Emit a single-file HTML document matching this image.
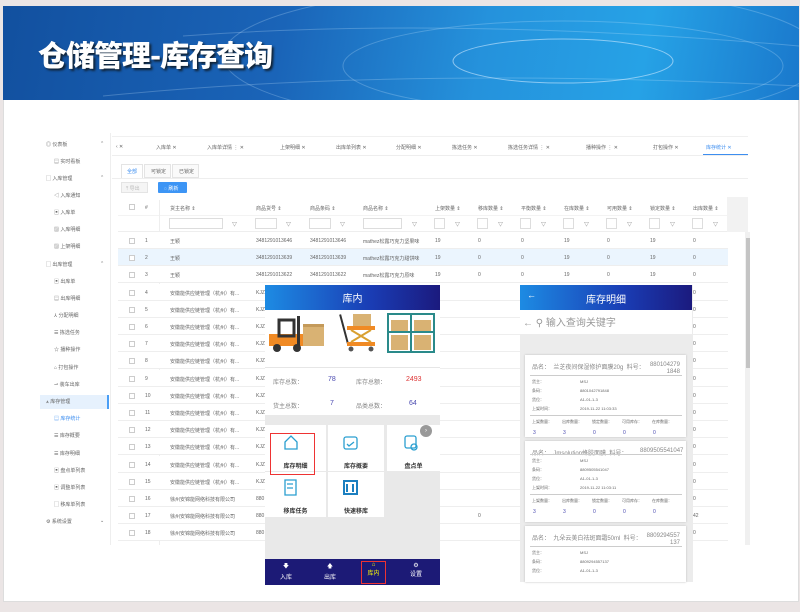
<!DOCTYPE html>
<html><head><meta charset="utf-8"><style>
*{margin:0;padding:0;box-sizing:border-box}
body{width:800px;height:612px;background:#ebe5e5;font-family:"Liberation Sans","Noto Sans CJK SC",sans-serif;position:relative;overflow:hidden;color:#666}
.a{position:absolute}
.t{font-size:5px;white-space:nowrap;color:#666}
.page{left:3px;top:6px;width:796px;height:596px;background:#fff;border:1px solid #ddd}
.banner{left:3px;top:6px;width:796px;height:94px;background:linear-gradient(100deg,#12509f 0%,#1a64b8 35%,#2592dc 60%,#26a2e6 80%,#1a78cc 100%);overflow:hidden}
.banner h1{position:absolute;left:35px;top:27px;font-size:29px;font-weight:900;color:#fff;letter-spacing:-1px;font-family:"Noto Sans CJK SC",sans-serif;text-shadow:2px 2px 2px #123}
.row{position:absolute;left:118px;width:610px;height:17px;border-bottom:1px solid #eee}
.ph{background:linear-gradient(90deg,#1d8be3,#1a3db5 60%,#1b1a7e)}
.cell{position:absolute;background:#fff;text-align:center;font-size:6px;font-weight:bold;color:#333}
.card{position:absolute;left:525px;width:161px;background:#fff;box-shadow:0 0 2px #bbb}
.nav{position:absolute;color:#fff;font-size:6px;text-align:center}
</style></head><body>
<div class="a page"></div>
<div class="a banner">
<svg class="a" style="left:0;top:0" width="796" height="94"><g fill="none" stroke="#cfeaff" stroke-opacity=".25"><ellipse cx="560" cy="60" rx="220" ry="45"/><ellipse cx="520" cy="50" rx="300" ry="70"/><path d="M180 30 Q450 10 796 40"/><path d="M100 90 Q400 60 796 80"/><ellipse cx="560" cy="55" rx="110" ry="22" stroke-opacity=".6"/></g></svg>
<h1>仓储管理-库存查询</h1></div>
<div class="a" style="left:110px;top:133px;width:1px;height:412px;background:#eee"></div>
<div class="a" style="left:40px;top:395px;width:69px;height:14px;background:#e6f1fd;border-right:2px solid #4a9ef5"></div>
<div class="sb">
<div class="a t" style="left:46px;top:141px">◎ 仪表板</div><div class="a t" style="left:100px;top:141px">⌃</div>
<div class="a t" style="left:54px;top:158px">▤ 实时看板</div>
<div class="a t" style="left:46px;top:175px">▢ 入库管理</div><div class="a t" style="left:100px;top:175px">⌃</div>
<div class="a t" style="left:54px;top:192px">◁ 入库通知</div>
<div class="a t" style="left:54px;top:209px">▣ 入库单</div>
<div class="a t" style="left:54px;top:226px">▨ 入库明细</div>
<div class="a t" style="left:54px;top:243px">▨ 上架明细</div>
<div class="a t" style="left:46px;top:261px">▢ 出库管理</div><div class="a t" style="left:100px;top:261px">⌃</div>
<div class="a t" style="left:54px;top:278px">▣ 出库单</div>
<div class="a t" style="left:54px;top:295px">▤ 出库明细</div>
<div class="a t" style="left:54px;top:312px">⅄ 分配明细</div>
<div class="a t" style="left:54px;top:329px">☰ 拣选任务</div>
<div class="a t" style="left:54px;top:346px">☆ 播种操作</div>
<div class="a t" style="left:54px;top:364px">⌂ 打包操作</div>
<div class="a t" style="left:54px;top:381px">⇀ 装车出库</div>
<div class="a t" style="left:46px;top:398px">⩓ 库存管理</div>
<div class="a t" style="left:54px;top:415px;color:#3d8ef0">▤ 库存统计</div>
<div class="a t" style="left:54px;top:432px">☰ 库存概要</div>
<div class="a t" style="left:54px;top:450px">☰ 库存明细</div>
<div class="a t" style="left:54px;top:467px">▣ 盘点单列表</div>
<div class="a t" style="left:54px;top:484px">▣ 调整单列表</div>
<div class="a t" style="left:54px;top:501px">▢ 移库单列表</div>
<div class="a t" style="left:46px;top:518px">⚙ 系统设置</div><div class="a t" style="left:100px;top:518px">⌄</div>
</div>
<div class="a" style="left:112px;top:136px;width:636px;height:1px;background:#f0f0f0"></div>
<div class="a" style="left:112px;top:155px;width:636px;height:1px;background:#eee"></div>
<div class="a t" style="left:116px;top:144px">‹ ✕</div>
<div class="a t" style="left:156px;top:144px">入库单 ✕</div>
<div class="a t" style="left:207px;top:144px">入库单详情 ⋮ ✕</div>
<div class="a t" style="left:280px;top:144px">上架明细 ✕</div>
<div class="a t" style="left:336px;top:144px">出库单列表 ✕</div>
<div class="a t" style="left:396px;top:144px">分配明细 ✕</div>
<div class="a t" style="left:452px;top:144px">拣选任务 ✕</div>
<div class="a t" style="left:508px;top:144px">拣选任务详情 ⋮ ✕</div>
<div class="a t" style="left:586px;top:144px">播种操作 ⋮ ✕</div>
<div class="a t" style="left:653px;top:144px">打包操作 ✕</div>
<div class="a t" style="left:706px;top:144px;color:#3d8ef0">库存统计 ✕</div>
<div class="a" style="left:703px;top:154px;width:45px;height:1px;background:#3d8ef0"></div>
<div class="a" style="left:121px;top:164px;width:22px;height:14px;border:1px solid #e4e4e4;border-bottom:none"></div>
<div class="a" style="left:144px;top:164px;width:27px;height:14px;border:1px solid #e4e4e4;background:#fafafa"></div>
<div class="a" style="left:172px;top:164px;width:27px;height:14px;border:1px solid #e4e4e4;background:#fafafa"></div>
<div class="a" style="left:112px;top:178px;width:636px;height:1px;background:#eee"></div>
<div class="a t" style="left:127px;top:168px;color:#3d8ef0">全部</div>
<div class="a t" style="left:151px;top:168px">可锁定</div>
<div class="a t" style="left:179px;top:168px">已锁定</div>
<div class="a" style="left:121px;top:182px;width:27px;height:11px;border:1px solid #e4e4e4;background:#f5f5f5"></div>
<div class="a t" style="left:126px;top:185px;color:#bbb">⤒ 导出</div>
<div class="a" style="left:158px;top:182px;width:29px;height:11px;background:#3d95f5;border-radius:1px"></div>
<div class="a t" style="left:164px;top:185px;color:#fff">◌ 刷新</div>
<div class="a" style="left:118px;top:200px;width:610px;height:32px;background:#fff;border-bottom:1px solid #eee"></div>
<div class="a" style="left:118px;top:215px;width:610px;height:1px;background:#f3f3f3"></div>
<div class="a" style="left:727px;top:197px;width:21px;height:35px;background:#f2f2f2"></div>
<div class="a" style="left:745px;top:232px;width:5px;height:313px;background:#f0f0f0"></div>
<div class="a" style="left:746px;top:238px;width:4px;height:130px;background:#c4c4c4"></div>
<div class="a" style="left:159px;top:200px;width:1px;height:345px;background:#eee"></div>
<div class="a" style="left:129px;top:204px;width:6px;height:6px;border:1px solid #ccc"></div>
<div class="a t" style="left:145px;top:205px">#</div>
<div class="a t" style="left:170px;top:205px">货主名称 ⇕</div>
<div class="a t" style="left:256px;top:205px">商品货号 ⇕</div>
<div class="a t" style="left:310px;top:205px">商品条码 ⇕</div>
<div class="a t" style="left:363px;top:205px">商品名称 ⇕</div>
<div class="a t" style="left:435px;top:205px">上架数量 ⇕</div>
<div class="a t" style="left:478px;top:205px">移库数量 ⇕</div>
<div class="a t" style="left:521px;top:205px">平衡数量 ⇕</div>
<div class="a t" style="left:564px;top:205px">在库数量 ⇕</div>
<div class="a t" style="left:607px;top:205px">可用数量 ⇕</div>
<div class="a t" style="left:650px;top:205px">锁定数量 ⇕</div>
<div class="a t" style="left:693px;top:205px">出库数量 ⇕</div>
<div class="a" style="left:169px;top:218px;width:54px;height:11px;border:1px solid #ddd"></div><div class="a t" style="left:232px;top:221px">▽</div>
<div class="a" style="left:255px;top:218px;width:22px;height:11px;border:1px solid #ddd"></div><div class="a t" style="left:286px;top:221px">▽</div>
<div class="a" style="left:309px;top:218px;width:22px;height:11px;border:1px solid #ddd"></div><div class="a t" style="left:340px;top:221px">▽</div>
<div class="a" style="left:363px;top:218px;width:39px;height:11px;border:1px solid #ddd"></div><div class="a t" style="left:412px;top:221px">▽</div>
<div class="a" style="left:434px;top:218px;width:11px;height:11px;border:1px solid #ddd"></div><div class="a t" style="left:455px;top:221px">▽</div>
<div class="a" style="left:477px;top:218px;width:11px;height:11px;border:1px solid #ddd"></div><div class="a t" style="left:498px;top:221px">▽</div>
<div class="a" style="left:520px;top:218px;width:11px;height:11px;border:1px solid #ddd"></div><div class="a t" style="left:541px;top:221px">▽</div>
<div class="a" style="left:563px;top:218px;width:11px;height:11px;border:1px solid #ddd"></div><div class="a t" style="left:584px;top:221px">▽</div>
<div class="a" style="left:606px;top:218px;width:11px;height:11px;border:1px solid #ddd"></div><div class="a t" style="left:627px;top:221px">▽</div>
<div class="a" style="left:649px;top:218px;width:11px;height:11px;border:1px solid #ddd"></div><div class="a t" style="left:670px;top:221px">▽</div>
<div class="a" style="left:692px;top:218px;width:11px;height:11px;border:1px solid #ddd"></div><div class="a t" style="left:713px;top:221px">▽</div>
<div id="rows"></div>
<script>
var h='';for(var i=1;i<=18;i++){var y=232+(i-1)*17.2;var bg=i==2?'#ebf5fe':'#fff';
var owner=i<=3?'王颖':(i<=15?'安徽能供应链管理（杭州）有...':'徐州安锦能网络科技有限公司');
var code=i<=3?['3481291013646','3481291013639','3481291013622'][i-1]:(i<=15?'KJZ':'880');
var nm=i<=3?['mathez松露巧克力坚果味','mathez松露巧克力甜饼味','mathez松露巧克力原味'][i-1]:'';
h+='<div class="row" style="top:'+y+'px;background:'+bg+'"></div>';
h+='<div class="a" style="left:129px;top:'+(y+6)+'px;width:6px;height:6px;border:1px solid #ccc;background:#fff"></div>';
h+='<div class="a t" style="left:145px;top:'+(y+6)+'px">'+i+'</div>';
h+='<div class="a t" style="left:170px;top:'+(y+6)+'px">'+owner+'</div>';
h+='<div class="a t" style="left:256px;top:'+(y+6)+'px">'+code+'</div>';
if(i<=3){h+='<div class="a t" style="left:310px;top:'+(y+6)+'px">'+code+'</div><div class="a t" style="left:363px;top:'+(y+6)+'px">'+nm+'</div>';
var v=[19,0,0,19,0,19,0];for(var k=0;k<7;k++)h+='<div class="a t" style="left:'+(435+k*43)+'px;top:'+(y+6)+'px">'+v[k]+'</div>';}
else{h+='<div class="a t" style="left:478px;top:'+(y+6)+'px">'+(i==17?'0':'')+'</div><div class="a t" style="left:521px;top:'+(y+6)+'px">0</div><div class="a t" style="left:693px;top:'+(y+6)+'px">'+(i==17?'42':'0')+'</div>';}
}document.getElementById('rows').innerHTML=h;
</script>
<div class="a" style="left:265px;top:285px;width:175px;height:300px;background:#e9e9e9"></div>
<div class="a ph" style="left:265px;top:285px;width:175px;height:25px"></div>
<div class="a" style="left:265px;top:290px;width:175px;text-align:center;color:#fff;font-size:10px">库内</div>
<div class="a" style="left:265px;top:310px;width:175px;height:57px;background:#fff"></div>
<svg class="a" style="left:267px;top:312px" width="170" height="54">
<rect x="2" y="22" width="35" height="12" fill="#f08a24"/><rect x="12" y="8" width="15" height="16" fill="none" stroke="#333" stroke-width="3"/><rect x="30" y="4" width="3" height="30" fill="#333"/>
<circle cx="10" cy="36" r="4" fill="#333"/><circle cx="30" cy="36" r="4" fill="#333"/><rect x="36" y="12" width="21" height="22" fill="#d9b273"/><rect x="36" y="12" width="21" height="3" fill="#c49a5a"/>
<rect x="76" y="2" width="2" height="30" fill="#333" transform="rotate(-15 77 17)"/><rect x="80" y="14" width="28" height="4" fill="#f08a24"/><rect x="80" y="30" width="28" height="4" fill="#f08a24"/><path d="M84 18 L104 30 M104 18 L84 30" stroke="#d9a030" stroke-width="2"/><rect x="86" y="2" width="18" height="12" fill="#d9b273"/><circle cx="84" cy="37" r="2.5" fill="#555"/><circle cx="104" cy="37" r="2.5" fill="#555"/>
<rect x="121" y="2" width="46" height="38" fill="none" stroke="#2a8a8a" stroke-width="2"/><line x1="144" y1="2" x2="144" y2="40" stroke="#2a8a8a" stroke-width="2"/><line x1="121" y1="20" x2="167" y2="20" stroke="#2a8a8a" stroke-width="2"/>
<rect x="124" y="8" width="17" height="11" fill="#d9b273"/><rect x="147" y="8" width="17" height="11" fill="#d9b273"/><rect x="124" y="23" width="17" height="15" fill="#d9b273"/><rect x="147" y="23" width="17" height="15" fill="#d9b273"/></svg>
<div class="a" style="left:265px;top:367px;width:175px;height:48px;background:#fff;border-top:1px solid #e6e6e6"></div>
<div class="a t" style="left:273px;top:377px;font-size:6px;color:#888">库存总数：</div><div class="a t" style="left:328px;top:376px;font-size:7px;color:#4a4ab0">78</div>
<div class="a t" style="left:356px;top:377px;font-size:6px;color:#888">库存总额：</div><div class="a t" style="left:406px;top:376px;font-size:7px;color:#d33">2493</div>
<div class="a t" style="left:273px;top:401px;font-size:6px;color:#888">货主总数：</div><div class="a t" style="left:330px;top:400px;font-size:7px;color:#4a4ab0">7</div>
<div class="a t" style="left:356px;top:401px;font-size:6px;color:#888">品类总数：</div><div class="a t" style="left:409px;top:400px;font-size:7px;color:#4a4ab0">64</div>
<div class="cell" style="left:265px;top:425px;width:61px;height:46px"></div>
<div class="cell" style="left:328px;top:425px;width:56px;height:46px"></div>
<div class="cell" style="left:387px;top:425px;width:53px;height:46px"></div>
<div class="cell" style="left:265px;top:472px;width:61px;height:45px"></div>
<div class="cell" style="left:328px;top:472px;width:56px;height:45px"></div>
<div class="a" style="left:270px;top:433px;width:45px;height:42px;border:1px solid #e33"></div>
<svg class="a" style="left:283px;top:434px" width="150" height="80" fill="none" stroke="#2a9fd0" stroke-width="1.3">
<path d="M2 8 L8 2 L14 8 L14 15 L2 15 Z"/>
<rect x="61" y="3" width="13" height="12" rx="2"/><path d="M64 10 l2 2 l5-4"/>
<rect x="122" y="2" width="11" height="12" rx="2"/><circle cx="131" cy="13" r="3"/>
<path d="M2 46 h11 v15 h-11 z M4 50 h6 M4 54 h6"/>
<path d="M61 47 h13 v13 h-13 z M64 50 v8 M70 50 v8" stroke="#1b7fc0" stroke-width="2"/></svg>
<div class="a" style="left:265px;top:461px;width:61px;text-align:center;font-size:6px;font-weight:bold;color:#333">库存明细</div>
<div class="a" style="left:328px;top:461px;width:56px;text-align:center;font-size:6px;font-weight:bold;color:#333">库存概要</div>
<div class="a" style="left:387px;top:461px;width:53px;text-align:center;font-size:6px;font-weight:bold;color:#333">盘点单</div>
<div class="a" style="left:265px;top:506px;width:61px;text-align:center;font-size:6px;font-weight:bold;color:#333">移库任务</div>
<div class="a" style="left:328px;top:506px;width:56px;text-align:center;font-size:6px;font-weight:bold;color:#333">快速移库</div>
<div class="a" style="left:420px;top:425px;width:12px;height:12px;border-radius:50%;background:#999;color:#fff;font-size:6px;text-align:center;line-height:12px">›</div>
<div class="a" style="left:265px;top:559px;width:175px;height:26px;background:#1c1a76"></div>
<div class="nav" style="left:278px;top:562px;width:16px">🡇<br>入库</div>
<div class="nav" style="left:322px;top:562px;width:16px">🡅<br>出库</div>
<div class="a" style="left:361px;top:561px;width:25px;height:23px;border:1px solid #e33"></div>
<div class="nav" style="left:364px;top:562px;width:19px;color:#ff0">⌂<br>库内</div>
<div class="nav" style="left:408px;top:562px;width:16px">⚙<br>设置</div>
<div class="a" style="left:520px;top:285px;width:173px;height:297px;background:#ececec"></div>
<div class="a ph" style="left:520px;top:285px;width:172px;height:25px"></div>
<div class="a" style="left:527px;top:290px;color:#fff;font-size:9px">←</div>
<div class="a" style="left:520px;top:291px;width:172px;text-align:center;color:#fff;font-size:10px">库存明细</div>
<div class="a" style="left:520px;top:310px;width:172px;height:24px;background:#fff"></div>
<div class="a" style="left:523px;top:314px;color:#999;font-size:10px">← ⚲ 输入查询关键字</div>
<div class="card" style="top:355px;height:82px"></div>
<div class="card" style="top:441px;height:81px"></div>
<div class="card" style="top:526px;height:56px"></div>
<div id="cards"></div>
<script>
var c='',d=[[355,'兰芝夜间保湿修护面膜20g','880104279<br>1848','8801042791848','2019-11-22 11:03:33'],[441,'Jmsolution蜂胶面膜','8809505541047','8809505541047','2019-11-22 11:03:11'],[526,'九朵云美白祛斑面霜50ml','8809294557<br>137','8809294557137','2019-11-22 11:02:41']];
d.forEach(function(e,j){var y=e[0];c+='<div class="a t" style="left:532px;top:'+(y+7)+'px;font-size:6px;color:#888">品名：&nbsp; '+e[1]+' &nbsp;料号：</div><div class="a t" style="left:640px;top:'+(y+7)+'px;font-size:6px;color:#888;text-align:right;width:40px;white-space:normal;line-height:7px">'+e[2]+'</div>';
var o=j==1?13:20;c+='<div class="a" style="left:530px;top:'+(y+o)+'px;width:152px;height:1px;background:#ccc"></div>';
var L=[['货主：','MSJ'],['条码：',e[3]],['货位：','A1-01-1-3'],['上架时间：',e[4]]];L.forEach(function(l,k){if(j==2&&k==3)return;c+='<div class="a t" style="left:532px;top:'+(y+o+4+k*9)+'px;font-size:4px">'+l[0]+'</div><div class="a t" style="left:580px;top:'+(y+o+4+k*9)+'px;font-size:4px">'+l[1]+'</div>';});
if(j<2){c+='<div class="a" style="left:530px;top:'+(y+o+40)+'px;width:152px;height:1px;background:#ccc"></div>';
['上架数量：','出库数量：','锁定数量：','可用库存：','在库数量：'].forEach(function(s,k){c+='<div class="a t" style="left:'+(532+k*30)+'px;top:'+(y+o+44)+'px;font-size:4px">'+s+'</div><div class="a t" style="left:'+(533+k*30)+'px;top:'+(y+o+55)+'px;font-size:5px;color:#4a4ab0">'+(k<2?3:0)+'</div>';});}});
document.getElementById('cards').innerHTML=c;
</script>
</body></html>
